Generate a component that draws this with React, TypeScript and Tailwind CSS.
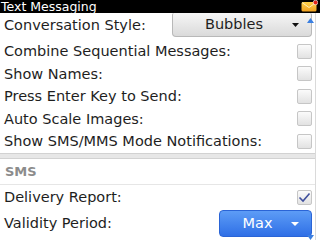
import React from "react";

const FONT = { fontFamily: '"DejaVu Sans", "Noto Sans", sans-serif' };

function Checkbox({ checked = false }: { checked?: boolean }) {
  return (
    <div className="w-[15px] h-[15px] rounded-[2px] border border-[#c6c6c6] bg-gradient-to-b from-[#fbfbfb] to-[#e2e2e2] flex items-center justify-center">
      {checked && (
        <svg width="13" height="11" viewBox="0 0 13 11">
          <path d="M1.5 5.5 L5 9 L11.5 1.5" fill="none" stroke="#3f4f9c" strokeWidth="1.6" />
        </svg>
      )}
    </div>
  );
}

function Row({ label, children, h = "h-[22.5px]" }: { label: string; children?: React.ReactNode; h?: string }) {
  return (
    <div className={`flex items-center ${h} pl-[4px] pr-[3px]`}>
      <span className="text-[14.5px] leading-none text-[#1e1e1e] whitespace-nowrap">{label}</span>
      <div className="ml-auto">{children}</div>
    </div>
  );
}

function Envelope() {
  return (
    <svg width="17" height="12" viewBox="0 0 17 12">
      <defs>
        <linearGradient id="env" x1="0" y1="0" x2="0" y2="1">
          <stop offset="0" stopColor="#ffd24a" />
          <stop offset="1" stopColor="#f0a020" />
        </linearGradient>
      </defs>
      <rect x="0.5" y="2" width="15" height="9.5" rx="1.5" fill="url(#env)" />
      <path d="M1 2.5 L8 7.5 L15 2.5" fill="none" stroke="#fff3c8" strokeWidth="0.9" />
      <circle cx="14.5" cy="2.5" r="2.3" fill="#e2231a" stroke="#ffffff" strokeWidth="0.6" />
    </svg>
  );
}

export default function App() {
  return (
    <div className="relative w-[320px] h-[240px] overflow-hidden bg-white" style={FONT}>
      <div className="h-[13px] bg-black flex items-start justify-between">
        <span className="text-[12.5px] leading-[13px] text-white pl-[1px]">Text Messaging</span>
        <div className="mr-[2px]">
          <Envelope />
        </div>
      </div>

      <div className="w-[316px] h-[227px] border-r border-[#dadada] flex flex-col">
        <div className="flex items-center h-[24px] pl-[4px] pr-[3px]">
          <span className="text-[14.5px] leading-none text-[#1e1e1e]">Conversation Style:</span>
          <div className="ml-auto w-[140px] h-[24px] rounded-b-[4px] rounded-t-[2px] border border-t-0 border-[#b8b8b8] bg-gradient-to-b from-[#f6f6f6] to-[#dadada] flex items-center">
            <span className="flex-1 text-center pl-[3px] text-[14.5px] leading-none text-[#1e1e1e]">Bubbles</span>
            <svg width="7" height="4" viewBox="0 0 7 4" className="mr-[12px]">
              <path d="M0 0 H7 L3.5 4 Z" fill="#111" />
            </svg>
          </div>
        </div>

        <div className="pt-[3px] pb-[0.5px]">
          <Row label="Combine Sequential Messages:">
            <Checkbox />
          </Row>
          <Row label="Show Names:">
            <Checkbox />
          </Row>
          <Row label="Press Enter Key to Send:">
            <Checkbox />
          </Row>
          <Row label="Auto Scale Images:">
            <Checkbox />
          </Row>
          <Row label="Show SMS/MMS Mode Notifications:">
            <Checkbox />
          </Row>
        </div>

        <div className="h-[6px] border-y border-[#d2d2d2] bg-[#e7e7e7]" />

        <div className="h-[26px] flex items-center pl-[5px] border-b border-[#e6e6e6]">
          <span className="text-[13px] font-bold leading-none text-[#8c8c8c]">SMS</span>
        </div>

        <Row label="Delivery Report:" h="h-[24px]">
          <Checkbox checked />
        </Row>

        <Row label="Validity Period:" h="h-[29px]">
          <div className="w-[93px] h-[27px] rounded-[4px] border border-[#2a64d6] bg-gradient-to-b from-[#5d9cf6] to-[#2f6fe6] flex items-center">
            <span className="flex-1 text-center pl-[4px] text-[14.5px] leading-none text-white">Max</span>
            <svg width="8" height="4" viewBox="0 0 8 4" className="mr-[12px]">
              <path d="M0 0 H8 L4 4 Z" fill="#ffffff" />
            </svg>
          </div>
        </Row>
      </div>

      <svg width="7" height="5" viewBox="0 0 7 5" className="absolute left-[307px] top-[18px]">
        <path d="M0 5 H7 L3.5 0 Z" fill="#3b7fe0" />
      </svg>
      <svg width="7" height="5" viewBox="0 0 7 5" className="absolute left-[307px] top-[235px]">
        <path d="M0 0 H7 L3.5 5 Z" fill="#3b7fe0" />
      </svg>
    </div>
  );
}
